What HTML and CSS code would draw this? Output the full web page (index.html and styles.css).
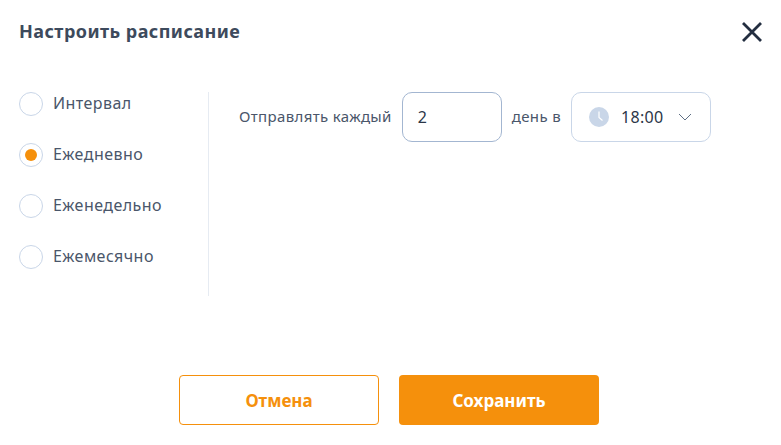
FILE: index.html
```html
<!DOCTYPE html>
<html lang="ru">
<head>
<meta charset="utf-8">
<title>Настроить расписание</title>
<link rel="stylesheet" href="styles.css">
</head>
<body>
<div class="dialog">
  <header class="head">
    <h1 class="title">Настроить расписание</h1>
    <button class="close" aria-label="Закрыть">
      <svg width="22" height="22" viewBox="0 0 22 22"><path d="M2 2 L20 20 M20 2 L2 20" stroke="#232e40" stroke-width="2.8" fill="none"/></svg>
    </button>
  </header>
  <div class="body">
    <div class="options">
      <div class="option"><span class="radio"></span><span class="opt-text">Интервал</span></div>
      <div class="option"><span class="radio on"></span><span class="opt-text">Ежедневно</span></div>
      <div class="option"><span class="radio"></span><span class="opt-text">Еженедельно</span></div>
      <div class="option"><span class="radio"></span><span class="opt-text">Ежемесячно</span></div>
    </div>
    <div class="config">
      <span class="label">Отправлять каждый</span>
      <div class="field num">2</div>
      <span class="label">день в</span>
      <div class="field time">
        <svg class="clock" width="20" height="20" viewBox="0 0 20 20"><circle cx="10" cy="10" r="10" fill="#c9d6e8"/><path d="M10 4.5 V10.5 L13.5 13.5" stroke="#fff" stroke-width="1.2" fill="none"/></svg>
        <span>18:00</span>
        <svg class="chev" width="14" height="8" viewBox="0 0 14 8"><path d="M1 1 L7 7 L13 1" stroke="#5f6f84" stroke-width="1" fill="none"/></svg>
      </div>
    </div>
  </div>
  <footer class="actions">
    <button class="btn ghost">Отмена</button>
    <button class="btn solid">Сохранить</button>
  </footer>
</div>
</body>
</html>
```

FILE: styles.css
```css
* { box-sizing: border-box; }
html, body { margin: 0; height: 100%; background: #fff; }
body { font-family: "Noto Sans", "Open Sans", sans-serif; color: #4a566a; overflow: hidden; }
.dialog { width: 781px; height: 445px; padding: 0 18px 0 19px; display: flex; flex-direction: column; }
.head { display: flex; justify-content: space-between; align-items: center; height: 62px; }
.title { margin: 0; font-size: 18px; font-weight: 700; color: #3d4a5c; letter-spacing: 0.45px; }
.close { border: 0; background: none; padding: 0; width: 22px; height: 22px; margin-top: 2px; margin-right: 0; }
.body { display: flex; margin-top: 30px; height: 204px; }
.options { width: 190px; border-right: 1px solid #e6ebf2; display: flex; flex-direction: column; gap: 27px; }
.option { display: flex; align-items: center; gap: 10px; font-size: 16px; height: 24px; letter-spacing: 0.45px; }
.opt-text { padding-bottom: 2px; }
.radio { width: 24px; height: 24px; border-radius: 50%; border: 1px solid #c9d6e8; display: flex; align-items: center; justify-content: center; }
.radio.on::after { content: ""; width: 12px; height: 12px; border-radius: 50%; background: #f5900c; }
.config { display: flex; align-items: flex-start; padding-left: 30px; gap: 10px; }
.label { font-size: 15px; line-height: 48px; letter-spacing: 0.35px; }
.field { height: 50px; border-radius: 10px; border: 1px solid #c9d6e8; display: flex; align-items: center; font-size: 16px; color: #2b3648; }
.num { width: 100px; padding-left: 15px; border-color: #a3b6d1; }
.time { width: 140px; padding-left: 17px; letter-spacing: 0.3px; }
.clock { margin-right: 12px; }
.chev { margin-left: 15px; }
.actions { display: flex; justify-content: center; gap: 20px; margin-top: 79px; padding-right: 4px; }
.btn { width: 200px; height: 50px; border-radius: 4px; font-family: inherit; font-size: 17px; font-weight: 700; }
.ghost { background: #fff; border: 1px solid #f5900c; color: #f5900c; }
.solid { background: #f5900c; border: 0; color: #fff; }
```
